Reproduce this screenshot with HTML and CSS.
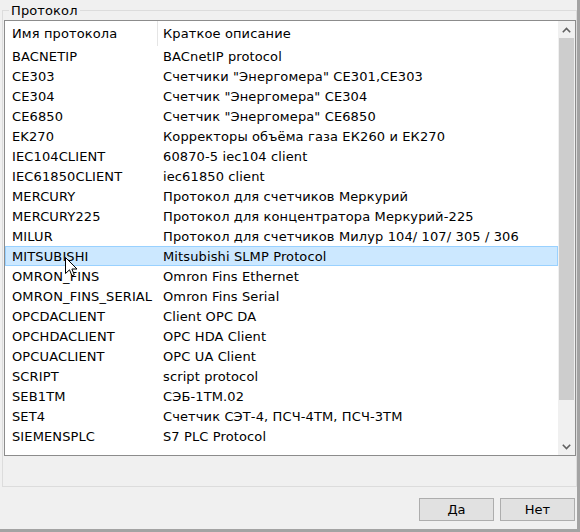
FILE: index.html
```html
<!DOCTYPE html>
<html lang="ru">
<head>
    <meta charset="UTF-8">
    <title>Протокол</title>
    <link rel="stylesheet" href="styles.css">
</head>
<body>
    <div class="window">
        <fieldset class="group">
            <legend>Протокол</legend>
            <div class="listview">
                <div class="list-body">
                    <div class="header">
                        <div class="col-name">Имя протокола</div>
                        <div class="col-desc">Краткое описание</div>
                    </div>
                    <div class="row"><div class="col-name">BACNETIP</div><div class="col-desc">BACnetIP protocol</div></div>
                    <div class="row"><div class="col-name">CE303</div><div class="col-desc">Счетчики "Энергомера" CE301,CE303</div></div>
                    <div class="row"><div class="col-name">CE304</div><div class="col-desc">Счетчик "Энергомера" CE304</div></div>
                    <div class="row"><div class="col-name">CE6850</div><div class="col-desc">Счетчик "Энергомера" CE6850</div></div>
                    <div class="row"><div class="col-name">EK270</div><div class="col-desc">Корректоры объёма газа ЕК260 и ЕК270</div></div>
                    <div class="row"><div class="col-name">IEC104CLIENT</div><div class="col-desc">60870-5 iec104 client</div></div>
                    <div class="row"><div class="col-name">IEC61850CLIENT</div><div class="col-desc">iec61850 client</div></div>
                    <div class="row"><div class="col-name">MERCURY</div><div class="col-desc">Протокол для счетчиков Меркурий</div></div>
                    <div class="row"><div class="col-name">MERCURY225</div><div class="col-desc">Протокол для концентратора Меркурий-225</div></div>
                    <div class="row"><div class="col-name">MILUR</div><div class="col-desc">Протокол для счетчиков Милур 104/ 107/ 305 / 306</div></div>
                    <div class="row selected"><div class="col-name">MITSUBISHI</div><div class="col-desc">Mitsubishi SLMP Protocol</div></div>
                    <div class="row"><div class="col-name">OMRON_FINS</div><div class="col-desc">Omron Fins Ethernet</div></div>
                    <div class="row"><div class="col-name">OMRON_FINS_SERIAL</div><div class="col-desc">Omron Fins Serial</div></div>
                    <div class="row"><div class="col-name">OPCDACLIENT</div><div class="col-desc">Client OPC DA</div></div>
                    <div class="row"><div class="col-name">OPCHDACLIENT</div><div class="col-desc">OPC HDA Client</div></div>
                    <div class="row"><div class="col-name">OPCUACLIENT</div><div class="col-desc">OPC UA Client</div></div>
                    <div class="row"><div class="col-name">SCRIPT</div><div class="col-desc">script protocol</div></div>
                    <div class="row"><div class="col-name">SEB1TM</div><div class="col-desc">СЭБ-1ТМ.02</div></div>
                    <div class="row"><div class="col-name">SET4</div><div class="col-desc">Счетчик СЭТ-4, ПСЧ-4ТМ, ПСЧ-3ТМ</div></div>
                    <div class="row"><div class="col-name">SIEMENSPLC</div><div class="col-desc">S7 PLC Protocol</div></div>

                    <!-- указатель мыши -->
                    <svg class="cursor" width="13" height="20" viewBox="0 0 13 20">
                        <path d="M0.5 0.5 L0.5 16.5 L4.5 12.8 L7 18.8 L9.3 17.8 L6.9 12 L12 12 Z" fill="#fff" stroke="#000" stroke-width="1" stroke-linejoin="miter"/>
                    </svg>
                </div>
                <div class="scrollbar">
                    <div class="sb-btn">
                        <svg width="9" height="6" viewBox="0 0 9 6"><path d="M0.8 5.2 L4.5 1.5 L8.2 5.2" fill="none" stroke="#606060" stroke-width="1.6"/></svg>
                    </div>
                    <div class="sb-track"><div class="sb-thumb"></div></div>
                    <div class="sb-btn">
                        <svg width="9" height="6" viewBox="0 0 9 6"><path d="M0.8 0.8 L4.5 4.5 L8.2 0.8" fill="none" stroke="#606060" stroke-width="1.6"/></svg>
                    </div>
                </div>
            </div>
        </fieldset>

        <div class="buttons">
            <button class="btn">Да</button>
            <button class="btn">Нет</button>
        </div>
    </div>
</body>
</html>
```

FILE: styles.css
```css
* {
    margin: 0;
    padding: 0;
    box-sizing: border-box;
}

body {
    background-color: #f0f0f0;
    font-family: 'DejaVu Sans', Verdana, sans-serif;
    font-size: 13px;
    letter-spacing: 0.12px;
    color: #000;
}

.window {
    width: 580px;
    height: 532px;
    border-right: 3px solid #a3a3a3;
    border-bottom: 3px solid #a3a3a3;
    display: flex;
    flex-direction: column;
}

.group {
    margin: 3px 0 0 2px;
    height: 484px;
    border: 1px solid #dcdcdc;
    padding: 0;
}

.group legend {
    margin-left: 6px;
    padding: 0 2px;
    line-height: 15px;
}

.listview {
    display: flex;
    width: 572px;
    height: 436px;
    margin: 2px 0 0 1px;
    border: 1px solid #8c8c8c;
    background-color: #fff;
}

.list-body {
    flex: 1;
    position: relative;
    overflow: hidden;
}

.header,
.row {
    display: flex;
    white-space: nowrap;
}

.header {
    height: 25px;
    line-height: 26px;
}

.row {
    height: 20px;
    line-height: 21px;
}

.col-name {
    width: 153px;
    padding-left: 7px;
}

.col-desc {
    flex: 1;
    padding-left: 5px;
}

.header .col-name {
    border-right: 1px solid #e5e5e5;
}

.row.selected {
    background-color: #cce8ff;
    box-shadow: inset 0 0 0 1px #99d1ff;
}

.cursor {
    position: absolute;
    left: 60px;
    top: 236px;
}

.scrollbar {
    width: 17px;
    display: flex;
    flex-direction: column;
    background-color: #f0f0f0;
}

.sb-btn {
    height: 17px;
    display: flex;
    align-items: center;
    justify-content: center;
}

.sb-track {
    flex: 1;
}

.sb-thumb {
    height: 362px;
    margin: 0 1px;
    background-color: #cdcdcd;
}

.buttons {
    display: flex;
    justify-content: flex-end;
    gap: 6px;
    margin-top: 11px;
    padding-right: 2px;
}

.btn {
    width: 75px;
    height: 23px;
    background-color: #e1e1e1;
    border: 1px solid #adadad;
    font-family: 'DejaVu Sans', Verdana, sans-serif;
    font-size: 13px;
    color: #000;
}
```
